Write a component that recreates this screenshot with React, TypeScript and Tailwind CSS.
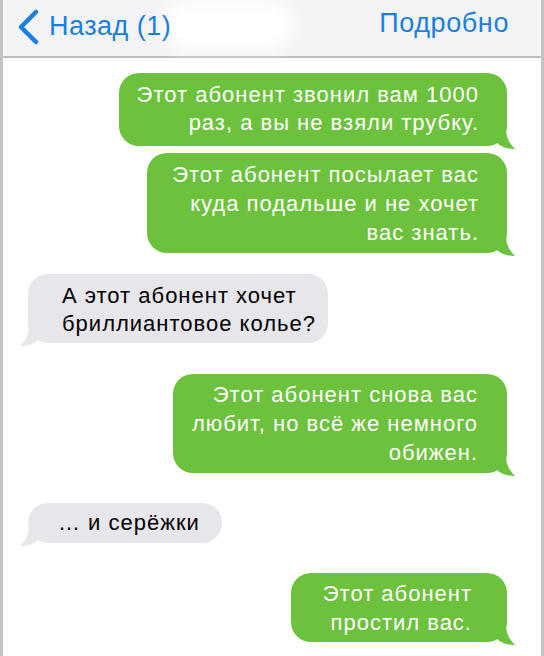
import React from "react";

type Side = "out" | "in";

function Tail({ side, color }: { side: Side; color: string }) {
  if (side === "out") {
    return (
      <svg
        className="absolute bottom-[-4px] right-[-9px]"
        width="20"
        height="22"
        viewBox="0 0 20 22"
      >
        <path d="M0 0 L10 0 C10 8 12 14 19 21 C12 21 6 19 2 16 Z" fill={color} />
      </svg>
    );
  }
  return (
    <svg
      className="absolute bottom-[-4px] left-[-9px]"
      width="20"
      height="22"
      viewBox="0 0 20 22"
    >
      <path d="M20 0 L10 0 C10 8 8 14 1 21 C8 21 14 19 18 16 Z" fill={color} />
    </svg>
  );
}

function Outgoing({
  lines,
  className,
}: {
  lines: string[];
  className: string;
}) {
  return (
    <div className="flex justify-end pr-[34px]">
      <div
        className={`relative rounded-[20px] bg-[#6cc23c] text-white text-right ${className}`}
      >
        {lines.map((l, i) => (
          <div key={i}>{l}</div>
        ))}
        <Tail side="out" color="#6cc23c" />
      </div>
    </div>
  );
}

function Incoming({
  lines,
  className,
}: {
  lines: string[];
  className: string;
}) {
  return (
    <div className="flex justify-start pl-[25px]">
      <div
        className={`relative rounded-[20px] bg-[#e6e6eb] text-black ${className}`}
      >
        {lines.map((l, i) => (
          <div key={i}>{l}</div>
        ))}
        <Tail side="in" color="#e6e6eb" />
      </div>
    </div>
  );
}

export default function App() {
  return (
    <div
      className="w-[544px] h-[656px] overflow-hidden bg-white border-l-[3px] border-r-[3px] border-[#c2c2c2] flex flex-col"
      style={{ fontFamily: '"Liberation Sans", Arial, sans-serif' }}
    >
      {/* navigation bar */}
      <div className="relative h-[58px] shrink-0 bg-[#f4f4f6] border-b-[2px] border-[#bdbdbd] flex items-start justify-between pt-[6px] px-[11px]">
        <div className="absolute left-[160px] top-[2px] w-[130px] h-[48px] rounded-full bg-white blur-[8px]" />
        <div className="relative flex items-center text-[#1a7fe4] text-[27px] leading-[34px]">
          <svg width="28" height="38" viewBox="0 0 28 38" className="mr-[7px] mt-[2px]">
            <path
              d="M22 4 L7 19 L22 34"
              fill="none"
              stroke="#1a7fe4"
              strokeWidth="4.5"
              strokeLinecap="round"
              strokeLinejoin="round"
            />
          </svg>
          <span className="tracking-[0.5px]">Назад (1)</span>
        </div>
        <div className="relative text-[#1a7fe4] text-[27px] leading-[34px] pr-[21px] tracking-[0.6px]">
          Подробно
        </div>
      </div>

      {/* conversation */}
      <div className="flex flex-col text-[22px] tracking-[1px] pt-[15px]">
        <Outgoing
          lines={["Этот абонент звонил вам 1000", "раз, а вы не взяли трубку."]}
          className="w-[388px] h-[73px] pr-[28px] pt-[8px] leading-[28px]"
        />
        <div className="h-[7px]" />
        <Outgoing
          lines={["Этот абонент посылает вас", "куда подальше и не хочет", "вас знать."]}
          className="w-[360px] h-[100px] pr-[28px] pt-[7px] leading-[29px]"
        />
        <div className="h-[21px]" />
        <Incoming
          lines={["А этот абонент хочет", "бриллиантовое колье?"]}
          className="w-[300px] h-[69px] pl-[34px] pt-[8px] leading-[28px]"
        />
        <div className="h-[31px]" />
        <Outgoing
          lines={["Этот абонент снова вас", "любит, но всё же немного", "обижен."]}
          className="w-[334px] h-[99px] pr-[29px] pt-[6px] leading-[29px]"
        />
        <div className="h-[30px]" />
        <Incoming
          lines={["… и серёжки"]}
          className="w-[194px] h-[40px] pl-[30px] pt-[6px] leading-[28px]"
        />
        <div className="h-[30px]" />
        <Outgoing
          lines={["Этот абонент", "простил вас."]}
          className="w-[216px] h-[69px] pr-[35px] pt-[6px] leading-[29px]"
        />
      </div>
    </div>
  );
}
